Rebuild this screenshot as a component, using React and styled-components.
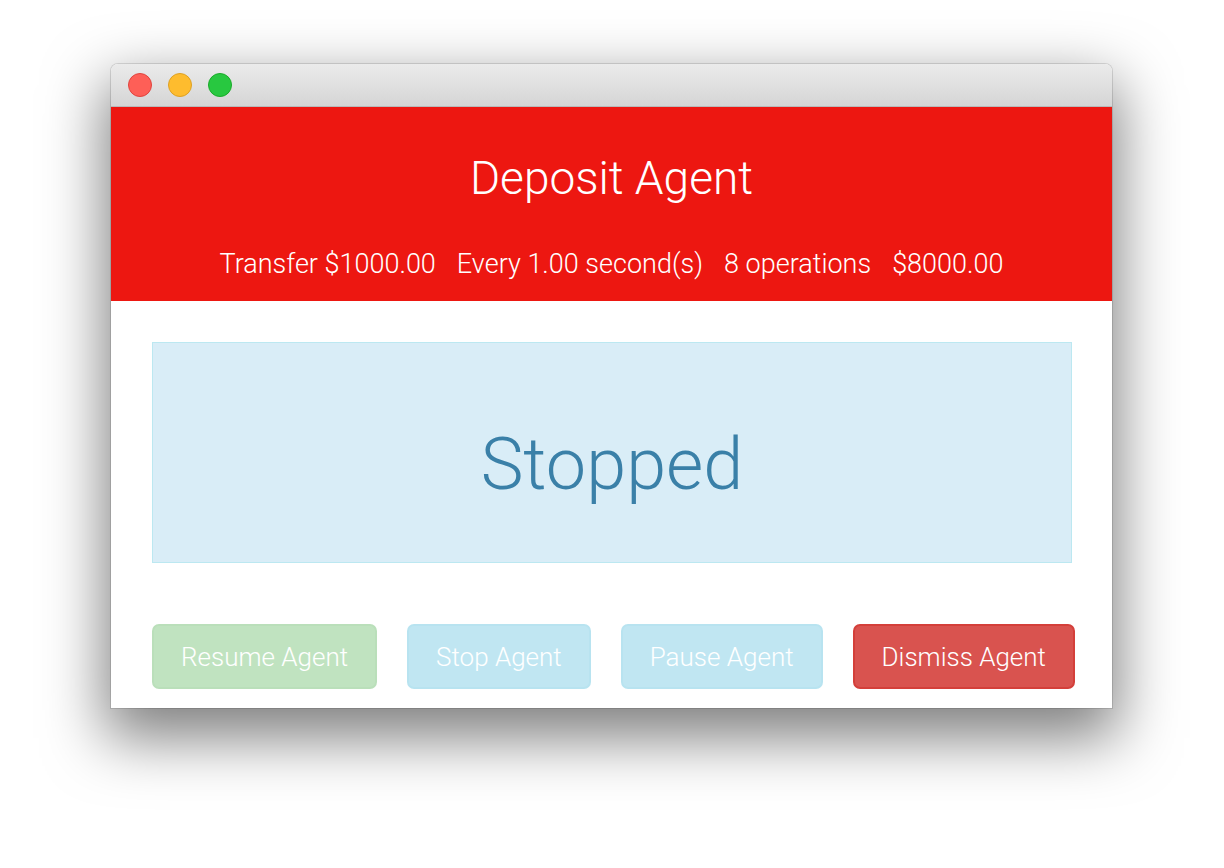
import React from 'react'
import styled, { createGlobalStyle } from 'styled-components'

const Global = createGlobalStyle`
  html, body {
    margin: 0;
    padding: 0;
    background: #fff;
  }
  body {
    font-family: 'Roboto', 'Liberation Sans', sans-serif;
    font-weight: 300;
  }
`

const Page = styled.div`
  width: 1224px;
  height: 868px;
  padding-top: 64px;
  box-sizing: border-box;
  display: flex;
  justify-content: center;
`

const Window = styled.div`
  width: 1001px;
  height: 644px;
  margin-left: -1px;
  border-radius: 7px 7px 0 0;
  overflow: hidden;
  background: #fff;
  box-shadow: 0 24px 60px 6px rgba(0, 0, 0, 0.5), 0 0 0 1px rgba(0, 0, 0, 0.12);
  display: flex;
  flex-direction: column;
`

const TitleBar = styled.div`
  height: 43px;
  flex: none;
  background: linear-gradient(#ebebeb, #d5d5d5);
  border-bottom: 1px solid #b9b9b9;
  display: flex;
  align-items: center;
  gap: 16px;
  padding-left: 17px;
  box-sizing: border-box;
`

const Light = styled.span`
  width: 24px;
  height: 24px;
  border-radius: 50%;
  background: ${p => p.$color};
  border: 1px solid ${p => p.$edge};
  box-sizing: border-box;
`

const Header = styled.div`
  height: 194px;
  flex: none;
  background: #ed1711;
  color: #fff;
  display: flex;
  flex-direction: column;
  align-items: center;
  box-sizing: border-box;
  padding-top: 44px;
`

const Title = styled.h1`
  margin: 0;
  font-size: 46px;
  font-weight: 300;
  line-height: 54px;
`

const Stats = styled.div`
  margin-top: 43px;
  display: flex;
  gap: 21px;
  font-size: 27px;
  line-height: 32px;
`

const Body = styled.div`
  padding: 41px 40px 0 41px;
  display: flex;
  flex-direction: column;
`

const Status = styled.div`
  height: 221px;
  background: #d9edf7;
  border: 1px solid #bce8f1;
  box-sizing: border-box;
  color: #3a80a8;
  font-size: 72px;
  display: flex;
  align-items: center;
  justify-content: center;
  padding-top: 24px;
`

const Buttons = styled.div`
  margin-top: 61px;
  display: flex;
  gap: 30px;
`

const palette = {
  success: { bg: '#5cb85c', border: '#4cae4c' },
  info: { bg: '#5bc0de', border: '#46b8da' },
  danger: { bg: '#d9534f', border: '#d43f3a' },
}

const Button = styled.button`
  flex: none;
  white-space: nowrap;
  height: 65px;
  padding: 0 27px;
  border-radius: 7px;
  font-family: inherit;
  font-weight: 300;
  font-size: 26px;
  color: #fff;
  background: ${p => palette[p.$kind].bg};
  border: 2px solid ${p => palette[p.$kind].border};
  opacity: ${p => (p.disabled ? 0.38 : 1)};
  cursor: ${p => (p.disabled ? 'not-allowed' : 'pointer')};
`

export default function App() {
  return (
    <Page>
      <Global />
      <Window>
        <TitleBar>
          <Light $color='#fe5f57' $edge='#e0443e' />
          <Light $color='#febc2e' $edge='#dea123' />
          <Light $color='#28c840' $edge='#1aab29' />
        </TitleBar>
        <Header>
          <Title>Deposit Agent</Title>
          <Stats>
            <span>Transfer $1000.00</span>
            <span>Every 1.00 second(s)</span>
            <span>8 operations</span>
            <span>$8000.00</span>
          </Stats>
        </Header>
        <Body>
          <Status>Stopped</Status>
          <Buttons>
            <Button $kind='success' disabled>Resume Agent</Button>
            <Button $kind='info' disabled>Stop Agent</Button>
            <Button $kind='info' disabled>Pause Agent</Button>
            <Button $kind='danger'>Dismiss Agent</Button>
          </Buttons>
        </Body>
      </Window>
    </Page>
  )
}
